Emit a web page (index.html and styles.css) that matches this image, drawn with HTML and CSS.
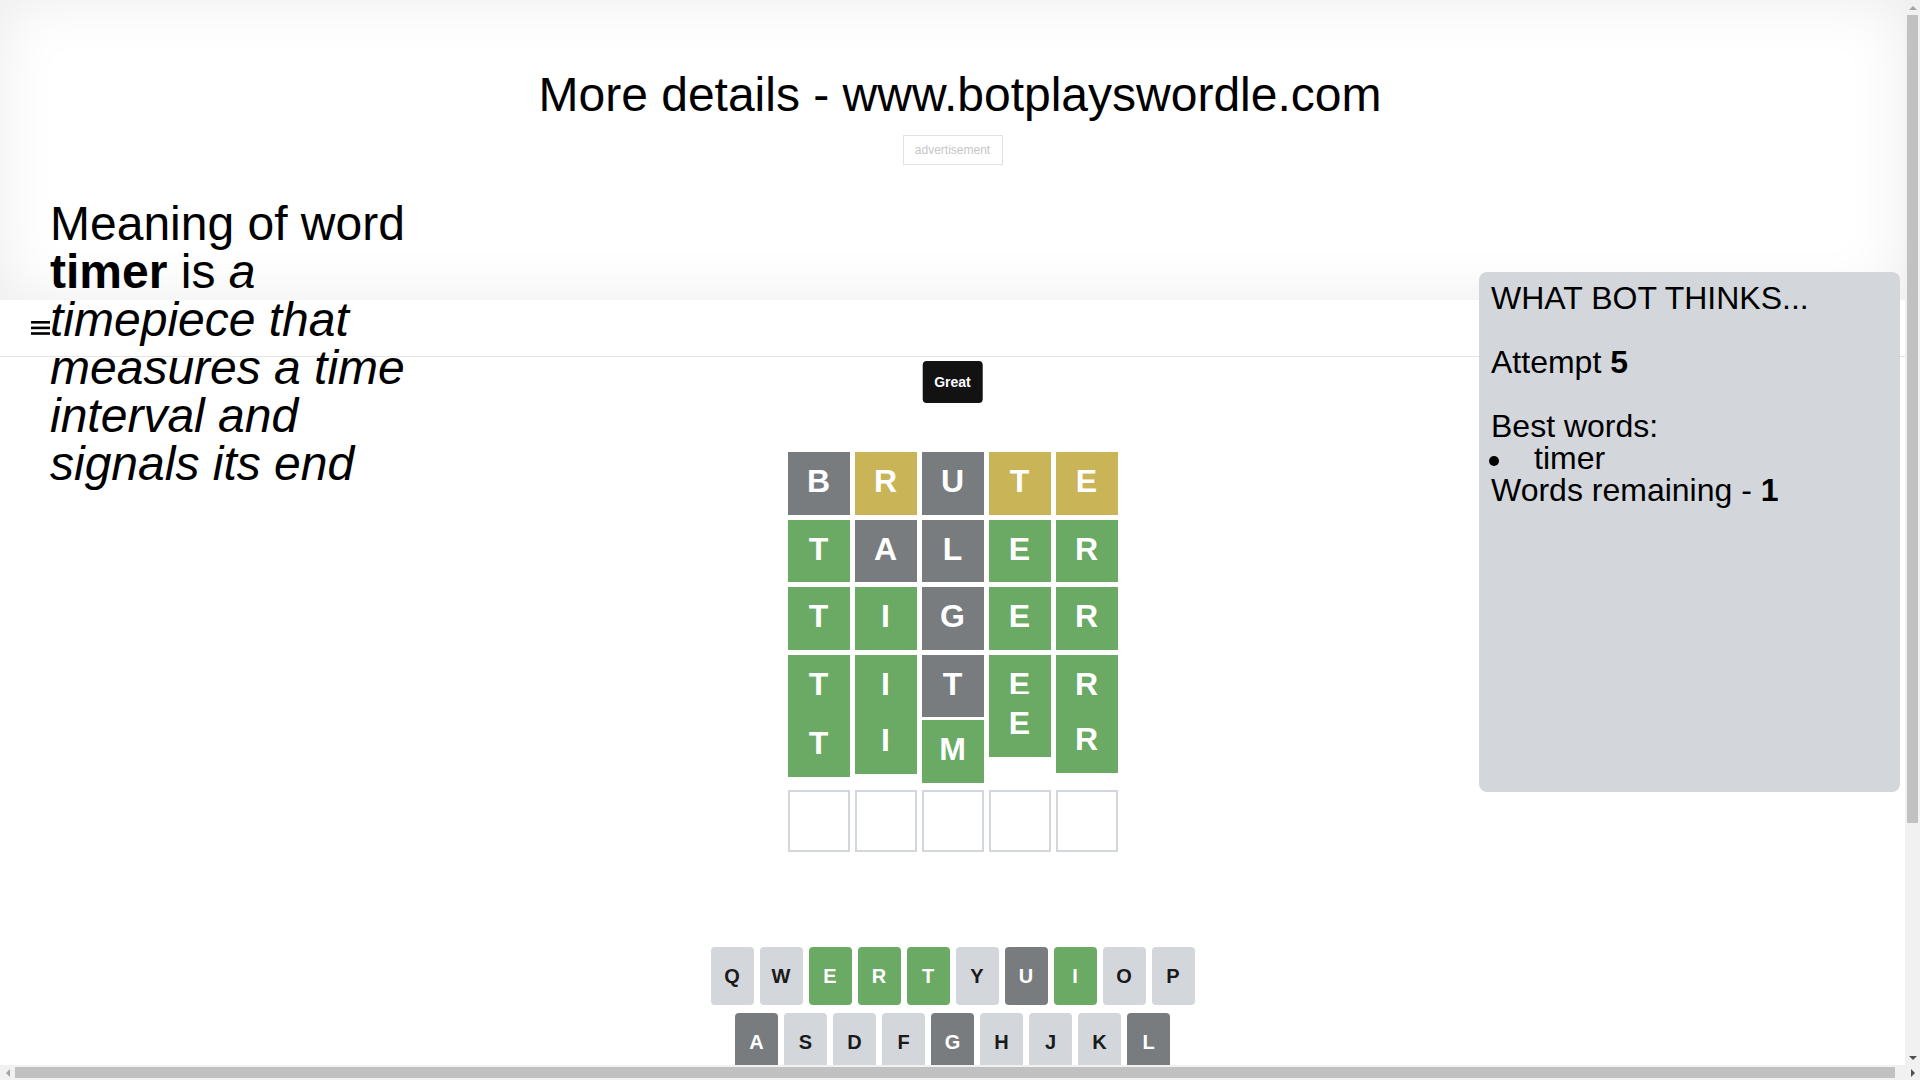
FILE: index.html
```html
<!DOCTYPE html>
<html lang="en">

<head>
    <meta charset="UTF-8">
    <meta name="viewport" content="width=device-width, initial-scale=1.0">
    <title>Bot plays Wordle</title>
    <link rel="stylesheet" href="styles.css">
</head>

<body>
    <div class="page">
        <div class="promo">
            <h1 class="promo-title">More details - www.botplayswordle.com</h1>
            <div class="ad-slot">advertisement</div>
        </div>

        <header class="topbar">
            <svg class="menu-icon" width="19" height="14" viewBox="0 0 19 14">
                <rect x="0" y="0" width="19" height="2.6" fill="#000"/>
                <rect x="0" y="5.6" width="19" height="2.6" fill="#000"/>
                <rect x="0" y="11.2" width="19" height="2.6" fill="#000"/>
            </svg>
        </header>

        <aside class="meaning">
            Meaning of word <b>timer</b> is <i>a timepiece that measures a time interval and signals its end</i>
        </aside>

        <aside class="bot-panel">
            WHAT BOT THINKS...<br><br>
            Attempt <b>5</b><br><br>
            Best words:
            <ul>
                <li>timer</li>
            </ul>
            Words remaining - <b>1</b>
        </aside>

        <main class="game">
            <div class="toast">Great</div>

            <div class="board-container">
                <div class="board">
                    <div class="row">
                        <div class="tile absent">B</div>
                        <div class="tile present">R</div>
                        <div class="tile absent">U</div>
                        <div class="tile present">T</div>
                        <div class="tile present">E</div>
                    </div>
                    <div class="row">
                        <div class="tile correct">T</div>
                        <div class="tile absent">A</div>
                        <div class="tile absent">L</div>
                        <div class="tile correct">E</div>
                        <div class="tile correct">R</div>
                    </div>
                    <div class="row">
                        <div class="tile correct">T</div>
                        <div class="tile correct">I</div>
                        <div class="tile absent">G</div>
                        <div class="tile correct">E</div>
                        <div class="tile correct">R</div>
                    </div>
                    <div class="row">
                        <div class="tile correct">T</div>
                        <div class="tile correct">I</div>
                        <div class="tile absent">T</div>
                        <div class="tile correct">E</div>
                        <div class="tile correct">R</div>
                    </div>
                    <!-- last guess is mid bounce -->
                    <div class="row">
                        <div class="tile correct bounce-a">T</div>
                        <div class="tile correct bounce-b">I</div>
                        <div class="tile correct bounce-c">M</div>
                        <div class="tile correct bounce-d">E</div>
                        <div class="tile correct bounce-e">R</div>
                    </div>
                    <div class="row">
                        <div class="tile empty"></div>
                        <div class="tile empty"></div>
                        <div class="tile empty"></div>
                        <div class="tile empty"></div>
                        <div class="tile empty"></div>
                    </div>
                </div>
            </div>

            <div class="keyboard">
                <div class="key-row">
                    <button class="key">Q</button>
                    <button class="key">W</button>
                    <button class="key correct">E</button>
                    <button class="key correct">R</button>
                    <button class="key correct">T</button>
                    <button class="key">Y</button>
                    <button class="key absent">U</button>
                    <button class="key correct">I</button>
                    <button class="key">O</button>
                    <button class="key">P</button>
                </div>
                <div class="key-row">
                    <button class="key absent">A</button>
                    <button class="key">S</button>
                    <button class="key">D</button>
                    <button class="key">F</button>
                    <button class="key absent">G</button>
                    <button class="key">H</button>
                    <button class="key">J</button>
                    <button class="key">K</button>
                    <button class="key absent">L</button>
                </div>
                <div class="key-row">
                    <button class="key wide">ENTER</button>
                    <button class="key">Z</button>
                    <button class="key">X</button>
                    <button class="key">C</button>
                    <button class="key">V</button>
                    <button class="key absent">B</button>
                    <button class="key">N</button>
                    <button class="key">M</button>
                    <button class="key wide">
                        <svg width="24" height="24" viewBox="0 0 24 24">
                            <path fill="#1a1a1b" d="M22 3H7c-.69 0-1.23.35-1.59.88L0 12l5.41 8.11c.36.53.9.89 1.59.89h15c1.1 0 2-.9 2-2V5c0-1.1-.9-2-2-2zm0 16H7.07L2.4 12l4.66-7H22v14zm-11.59-2L14 13.41 17.59 17 19 15.59 15.41 12 19 8.41 17.59 7 14 10.590 10.41 7 9 8.41 12.59 12 9 15.59z"/>
                        </svg>
                    </button>
                </div>
            </div>
        </main>
    </div>

    <!-- window scrollbars as they appear in the capture -->
    <div class="scrollbar scrollbar-v" aria-hidden="true">
        <span class="sb-arrow"><i class="tri up"></i></span>
        <span class="sb-thumb"></span>
        <span class="sb-space"></span>
        <span class="sb-arrow"><i class="tri down"></i></span>
    </div>
    <div class="scrollbar scrollbar-h" aria-hidden="true">
        <span class="sb-arrow"><i class="tri left"></i></span>
        <span class="sb-thumb"></span>
        <span class="sb-space"></span>
        <span class="sb-arrow"><i class="tri right"></i></span>
    </div>
</body>

</html>
```

FILE: styles.css
```css
html,
body {
    height: 100%;
    margin: 0;
    overflow: hidden;
}

body {
    font-family: "Liberation Sans", Arial, sans-serif;
    color: #000;
    background-color: #fff;
}

.page {
    position: relative;
    width: 1905px;
}

.promo {
    height: 300px;
    box-shadow: inset 0 0 60px rgba(0, 0, 0, 0.08);
}

.promo-title {
    width: 1920px;
    margin: 0;
    padding-top: 67px;
    font-size: 48px;
    font-weight: normal;
    text-align: center;
}

.ad-slot {
    width: 100px;
    height: 30px;
    margin: 13px auto 0;
    box-sizing: border-box;
    border: 1px solid #e2e2e2;
    display: flex;
    align-items: center;
    justify-content: center;
    font-size: 12px;
    color: #c6c6c6;
}

.topbar {
    height: 56px;
    border-bottom: 1px solid #e4e4e4;
    display: flex;
    align-items: center;
    padding-left: 31px;
}

.menu-icon {
    margin-top: -1px;
}

.meaning {
    position: absolute;
    left: 50px;
    top: 200px;
    width: 380px;
    font-size: 48px;
    line-height: 48px;
}

.bot-panel {
    position: absolute;
    top: 272px;
    right: 5px;
    width: 421px;
    height: 520px;
    box-sizing: border-box;
    padding: 10px 12px;
    background-color: #d3d6da;
    border-radius: 8px;
    font-size: 32px;
    line-height: 32px;
}

.bot-panel ul {
    margin: 0;
    padding: 0;
    list-style: none;
}

.bot-panel li::before {
    content: "";
    display: inline-block;
    width: 10px;
    height: 10px;
    margin: 0 35px 0 -2px;
    border-radius: 50%;
    background-color: #000;
    vertical-align: middle;
}

.game {
    position: relative;
    width: 500px;
    margin: 0 auto;
    display: flex;
    flex-direction: column;
}

.toast {
    position: absolute;
    top: 4px;
    left: 50%;
    transform: translateX(-50%);
    background-color: #121212;
    color: #fff;
    font-size: 14px;
    line-height: 16px;
    font-weight: bold;
    padding: 13px 12px;
    border-radius: 4px;
    z-index: 2;
}

.board-container {
    height: 590px;
    display: flex;
    align-items: center;
    justify-content: center;
}

.board {
    width: 350px;
    height: 420px;
    padding: 10px;
    box-sizing: border-box;
    display: grid;
    grid-template-rows: repeat(6, 1fr);
    gap: 5px;
}

.row {
    display: grid;
    grid-template-columns: repeat(5, 1fr);
    gap: 5px;
}

.tile {
    display: flex;
    align-items: center;
    justify-content: center;
    box-sizing: border-box;
    padding-bottom: 4px;
    font-size: 32px;
    line-height: 32px;
    font-weight: bold;
    color: #fff;
}

.tile.empty {
    border: 2px solid #d3d6da;
}

.tile.correct,
.key.correct {
    background-color: #6aaa64;
    color: #fff;
}

.tile.present {
    background-color: #c9b458;
}

.tile.absent,
.key.absent {
    background-color: #787c7e;
    color: #fff;
}

.bounce-a { transform: translateY(-8px); }
.bounce-b { transform: translateY(-11px); }
.bounce-c { transform: translateY(-2px); }
.bounce-d { transform: translateY(-28px); }
.bounce-e { transform: translateY(-12px); }

.keyboard {
    height: 200px;
}

.key-row {
    display: flex;
    justify-content: center;
    gap: 6px;
    margin-bottom: 8px;
}

.key {
    width: 43px;
    height: 58px;
    padding: 0;
    border: none;
    border-radius: 4px;
    background-color: #d3d6da;
    color: #1a1a1b;
    font-family: "Liberation Sans", Arial, sans-serif;
    font-size: 20px;
    font-weight: bold;
    display: flex;
    align-items: center;
    justify-content: center;
}

.key.wide {
    width: 65px;
    font-size: 12px;
}

/* scrollbars */
.scrollbar {
    position: fixed;
    display: flex;
    background-color: #f1f1f1;
    z-index: 10;
}

.scrollbar-v {
    top: 0;
    right: 0;
    width: 15px;
    height: 1065px;
    flex-direction: column;
}

.scrollbar-h {
    left: 0;
    bottom: 0;
    width: 1920px;
    height: 15px;
}

.sb-arrow {
    flex: 0 0 15px;
    width: 15px;
    height: 15px;
    display: flex;
    align-items: center;
    justify-content: center;
}

.sb-space {
    flex: 1;
}

.sb-thumb {
    background-color: #c1c1c1;
}

.scrollbar-v .sb-thumb {
    height: 808px;
    margin-left: 2px;
    width: 11px;
}

.scrollbar-h .sb-thumb {
    width: 1880px;
    margin-top: 2px;
    height: 11px;
}

.tri {
    width: 0;
    height: 0;
}

.tri.up {
    border-left: 4px solid transparent;
    border-right: 4px solid transparent;
    border-bottom: 4px solid #a3a3a3;
}

.tri.down {
    border-left: 4px solid transparent;
    border-right: 4px solid transparent;
    border-top: 4px solid #505050;
}

.tri.left {
    border-top: 4px solid transparent;
    border-bottom: 4px solid transparent;
    border-right: 4px solid #a3a3a3;
}

.tri.right {
    border-top: 4px solid transparent;
    border-bottom: 4px solid transparent;
    border-left: 4px solid #505050;
}
```
